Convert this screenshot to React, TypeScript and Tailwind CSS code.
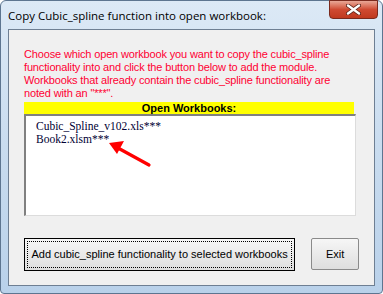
export default function App() {
  const sans = { fontFamily: '"Liberation Sans", Arial, sans-serif' }
  return (
    <div className="w-[383px] h-[294px] overflow-hidden bg-white">
      <div className="w-[383px] h-[294px] flex flex-col rounded-t-[6px] rounded-b-[4px] border border-[#5d7590] bg-gradient-to-b from-[#dce9f6] via-[#c9dcef] to-[#b9d1ea]">
        {/* title bar */}
        <div className="h-[28px] flex items-start relative">
          <div className="pl-[7px] pt-[6px] text-[11.5px] text-black" style={{ fontFamily: '"Open Sans", "Noto Sans", sans-serif' }}>
            Copy Cubic_spline function into open workbook:
          </div>
          <div className="absolute right-[4px] top-[-1px] w-[49px] h-[19px] rounded-b-[4px] border border-[#7a2a1e] bg-gradient-to-b from-[#e8a797] via-[#cf4a32] to-[#c0391f] flex items-center justify-center">
            <svg width="15" height="11" viewBox="0 0 15 11">
              <path d="M2 1.5 L13 9.5 M13 1.5 L2 9.5" stroke="#5a2218" strokeWidth="4" strokeLinecap="round" />
              <path d="M2 1.5 L13 9.5 M13 1.5 L2 9.5" stroke="#ffffff" strokeWidth="2.4" strokeLinecap="round" />
            </svg>
          </div>
        </div>
        {/* client area */}
        <div className="mx-[7px] mb-[7px] flex-1 border border-[#6e7f93] bg-[#f0f0f0] flex flex-col px-[15px] pt-[18px]" style={sans}>
          <p className="text-[11px] leading-[13px] text-[#ff0033] whitespace-nowrap tracking-[-0.15px]">
            Choose which open workbook you want to copy the cubic_spline<br />
            functionality into and click the button below to add the module.<br />
            Workbooks that already contain the cubic_spline functionality are<br />
            noted with an "***".
          </p>
          <div className="mt-[2px] w-[330px] h-[12px] bg-[#ffff00] text-[11px] leading-[12px] font-bold text-black text-center">
            Open Workbooks:
          </div>
          <div className="relative w-[332px] h-[102px] bg-white border-t-2 border-l-2 border-[#808080] border-r border-b border-r-[#dcdcdc] border-b-[#dcdcdc] pl-[10px] pt-[4px] text-[11.5px] leading-[13px] text-[#000033]" style={{ fontFamily: '"Liberation Serif", serif' }}>
            <div>Cubic_Spline_v102.xls***</div>
            <div>Book2.xlsm***</div>
            <svg className="absolute left-[80px] top-[22px]" width="50" height="32" viewBox="0 0 50 32">
              <path d="M43 27 L12 10" stroke="#ff0000" strokeWidth="3.2" strokeLinecap="round" />
              <path d="M3 5 L18 3 L11 16 Z" fill="#ff0000" />
            </svg>
          </div>
          <div className="mt-[22px] flex items-start">
            <button className="w-[272px] h-[33px] border border-black bg-gradient-to-b from-[#f6f6f6] to-[#dedede] p-[2px] text-[11px] text-black whitespace-nowrap">
              <span className="flex h-full w-full items-center justify-center border border-dotted border-black">
                Add cubic_spline functionality to selected workbooks
              </span>
            </button>
            <button className="ml-[16px] w-[48px] h-[32px] border border-[#8a8a8a] rounded-[2px] bg-gradient-to-b from-[#f6f6f6] to-[#dedede] text-[11px] text-black">
              Exit
            </button>
          </div>
        </div>
      </div>
    </div>
  )
}
